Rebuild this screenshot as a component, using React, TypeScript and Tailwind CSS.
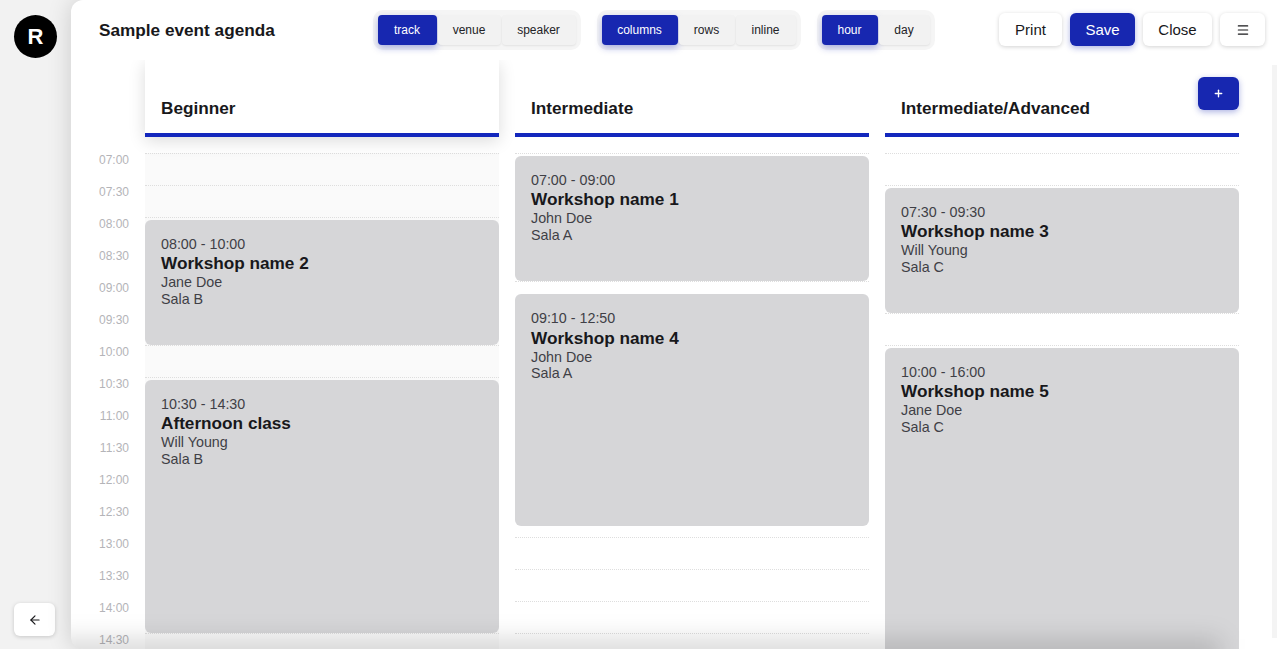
import React from "react";
import { ArrowLeft, Menu, Plus } from "lucide-react";

const SLOT = 32;
const DAY_START = 7 * 60;

type Workshop = { start: string; end: string; title: string; person: string; room: string };

const tracks: { name: string; active?: boolean; items: Workshop[] }[] = [
  {
    name: "Beginner",
    active: true,
    items: [
      { start: "08:00", end: "10:00", title: "Workshop name 2", person: "Jane Doe", room: "Sala B" },
      { start: "10:30", end: "14:30", title: "Afternoon class", person: "Will Young", room: "Sala B" },
    ],
  },
  {
    name: "Intermediate",
    items: [
      { start: "07:00", end: "09:00", title: "Workshop name 1", person: "John Doe", room: "Sala A" },
      { start: "09:10", end: "12:50", title: "Workshop name 4", person: "John Doe", room: "Sala A" },
    ],
  },
  {
    name: "Intermediate/Advanced",
    items: [
      { start: "07:30", end: "09:30", title: "Workshop name 3", person: "Will Young", room: "Sala C" },
      { start: "10:00", end: "16:00", title: "Workshop name 5", person: "Jane Doe", room: "Sala C" },
    ],
  },
];

const times: string[] = [];
for (let m = DAY_START; m <= 14 * 60 + 30; m += 30) {
  times.push(`${String(Math.floor(m / 60)).padStart(2, "0")}:${m % 60 === 0 ? "00" : "30"}`);
}

const minutes = (t: string) => {
  const [h, m] = t.split(":").map(Number);
  return h * 60 + m;
};

const Segmented = ({ options }: { options: { label: string; width: string }[] }) => (
  <div className="flex gap-px rounded-[10px] bg-[#f5f5f5] p-[5px]">
    {options.map((o, i) => (
      <button
        key={o.label}
        className={
          i === 0
            ? `h-[30px] rounded-[4px] bg-[#1727b0] text-xs text-white shadow-[0_3px_7px_rgba(23,39,176,0.35)] ${o.width}`
            : `h-[30px] rounded-[4px] bg-[#f2f2f2] text-xs text-[#222226] shadow-[0_1px_2px_rgba(0,0,0,0.08)] ${o.width}`
        }
      >
        {o.label}
      </button>
    ))}
  </div>
);

const ActionButton = ({
  children,
  primary,
  width,
}: {
  children: React.ReactNode;
  primary?: boolean;
  width: string;
}) => (
  <button
    className={
      primary
        ? `flex h-[33px] items-center justify-center rounded-[6px] bg-[#1727b0] pt-px text-[15px] text-white shadow-[0_2px_6px_rgba(23,39,176,0.35)] ${width}`
        : `flex h-[33px] items-center justify-center rounded-[6px] bg-white pt-px text-[15px] text-[#18181b] shadow-[0_1px_4px_rgba(0,0,0,0.18)] ${width}`
    }
  >
    {children}
  </button>
);

export default function App() {
  return (
    <div className="flex h-screen w-full overflow-hidden bg-[#f2f2f2] font-['Liberation_Sans',Arial,sans-serif]">
      <aside className="flex w-[71px] shrink-0 flex-col items-start justify-between pb-[13px] pl-[14px] pt-[15px]">
        <div className="flex h-[43px] w-[43px] items-center justify-center rounded-full bg-black text-[22px] font-bold text-white">
          R
        </div>
        <button className="flex h-[33px] w-[41px] items-center justify-center rounded-[6px] bg-white shadow-[0_1px_4px_rgba(0,0,0,0.18)]">
          <ArrowLeft size={14} strokeWidth={2} className="text-[#18181b]" />
        </button>
      </aside>

      <main className="relative flex min-w-0 flex-1 flex-col overflow-hidden rounded-l-[12px] bg-white shadow-[0_0_24px_rgba(0,0,0,0.16)]">
        <header className="flex h-[60px] shrink-0 items-start pl-[28px] pr-3">
          <h1 className="mr-[97.5px] mt-[19px] w-[176px] whitespace-nowrap text-[17.2px] font-bold leading-[22px] text-[#18181b]">
            Sample event agenda
          </h1>
          <div className="mt-[10px] flex gap-[16px]">
            <Segmented
              options={[
                { label: "track", width: "w-[59px]" },
                { label: "venue", width: "w-[63px]" },
                { label: "speaker", width: "w-[74px]" },
              ]}
            />
            <Segmented
              options={[
                { label: "columns", width: "w-[76px]" },
                { label: "rows", width: "w-[56px]" },
                { label: "inline", width: "w-[60px]" },
              ]}
            />
            <Segmented
              options={[
                { label: "hour", width: "w-[56px]" },
                { label: "day", width: "w-[51px]" },
              ]}
            />
          </div>
          <div className="ml-auto mt-[13px] flex gap-2">
            <ActionButton width="w-[63px]">Print</ActionButton>
            <ActionButton primary width="w-[65px]">
              Save
            </ActionButton>
            <ActionButton width="w-[69px]">Close</ActionButton>
            <ActionButton width="w-[45px]">
              <Menu size={14} strokeWidth={2} />
            </ActionButton>
          </div>
        </header>

        <div className="relative flex flex-1 gap-4 overflow-hidden pl-[28px]">
          <div className="w-[30px] shrink-0 pt-[93px]">
            {times.map((t) => (
              <div key={t} className="h-8 whitespace-nowrap text-right text-xs leading-[14px] text-[#b4b4b8]">
                {t}
              </div>
            ))}
          </div>

          {tracks.map((track) => (
            <section key={track.name} className="w-[354px] shrink-0">
              <div
                className={
                  track.active
                    ? "relative z-10 flex h-[77px] items-end border-b-4 border-[#1327bd] bg-white px-4 pb-[14px] shadow-[0_4px_16px_rgba(0,0,0,0.14)]"
                    : "flex h-[77px] items-end border-b-4 border-[#1327bd] px-4 pb-[14px]"
                }
              >
                <h2 className="text-[17.2px] font-bold leading-[21px] text-[#18181b]">{track.name}</h2>
              </div>
              <div className={track.active ? "relative mt-4 bg-[#fafafa]" : "relative mt-4"}>
                {times.map((t) => (
                  <div key={t} className="h-8 border-t border-dotted border-[#dedede]" />
                ))}
                {track.items.map((w) => (
                  <article
                    key={w.title}
                    className="absolute inset-x-0 rounded-[6px] bg-[#d6d6d8] px-4 pt-4 text-[14.3px] leading-[16.5px] text-[#3f3f46]"
                    style={{
                      top: ((minutes(w.start) - DAY_START) / 30) * SLOT + 2.5,
                      height: ((minutes(w.end) - minutes(w.start)) / 30) * SLOT - 3,
                    }}
                  >
                    <div>
                      {w.start} - {w.end}
                    </div>
                    <div className="mt-px text-[17.2px] font-bold leading-[21px] text-[#18181b]">{w.title}</div>
                    <div>{w.person}</div>
                    <div>{w.room}</div>
                  </article>
                ))}
              </div>
            </section>
          ))}

          <button className="absolute right-[38px] top-[17px] z-20 flex h-[33px] w-[41px] items-center justify-center rounded-[6px] bg-[#1727b0] text-white shadow-[0_2px_6px_rgba(23,39,176,0.35)]">
            <Plus size={11} strokeWidth={3} />
          </button>

          <div className="absolute bottom-[11px] right-0 top-[5px] w-[5px] bg-[#f4f4f4]" />
        </div>

        <div className="pointer-events-none absolute -bottom-[20px] -left-5 right-[57px] h-[30px] bg-black/15 blur-[12px]" />
      </main>
    </div>
  );
}
